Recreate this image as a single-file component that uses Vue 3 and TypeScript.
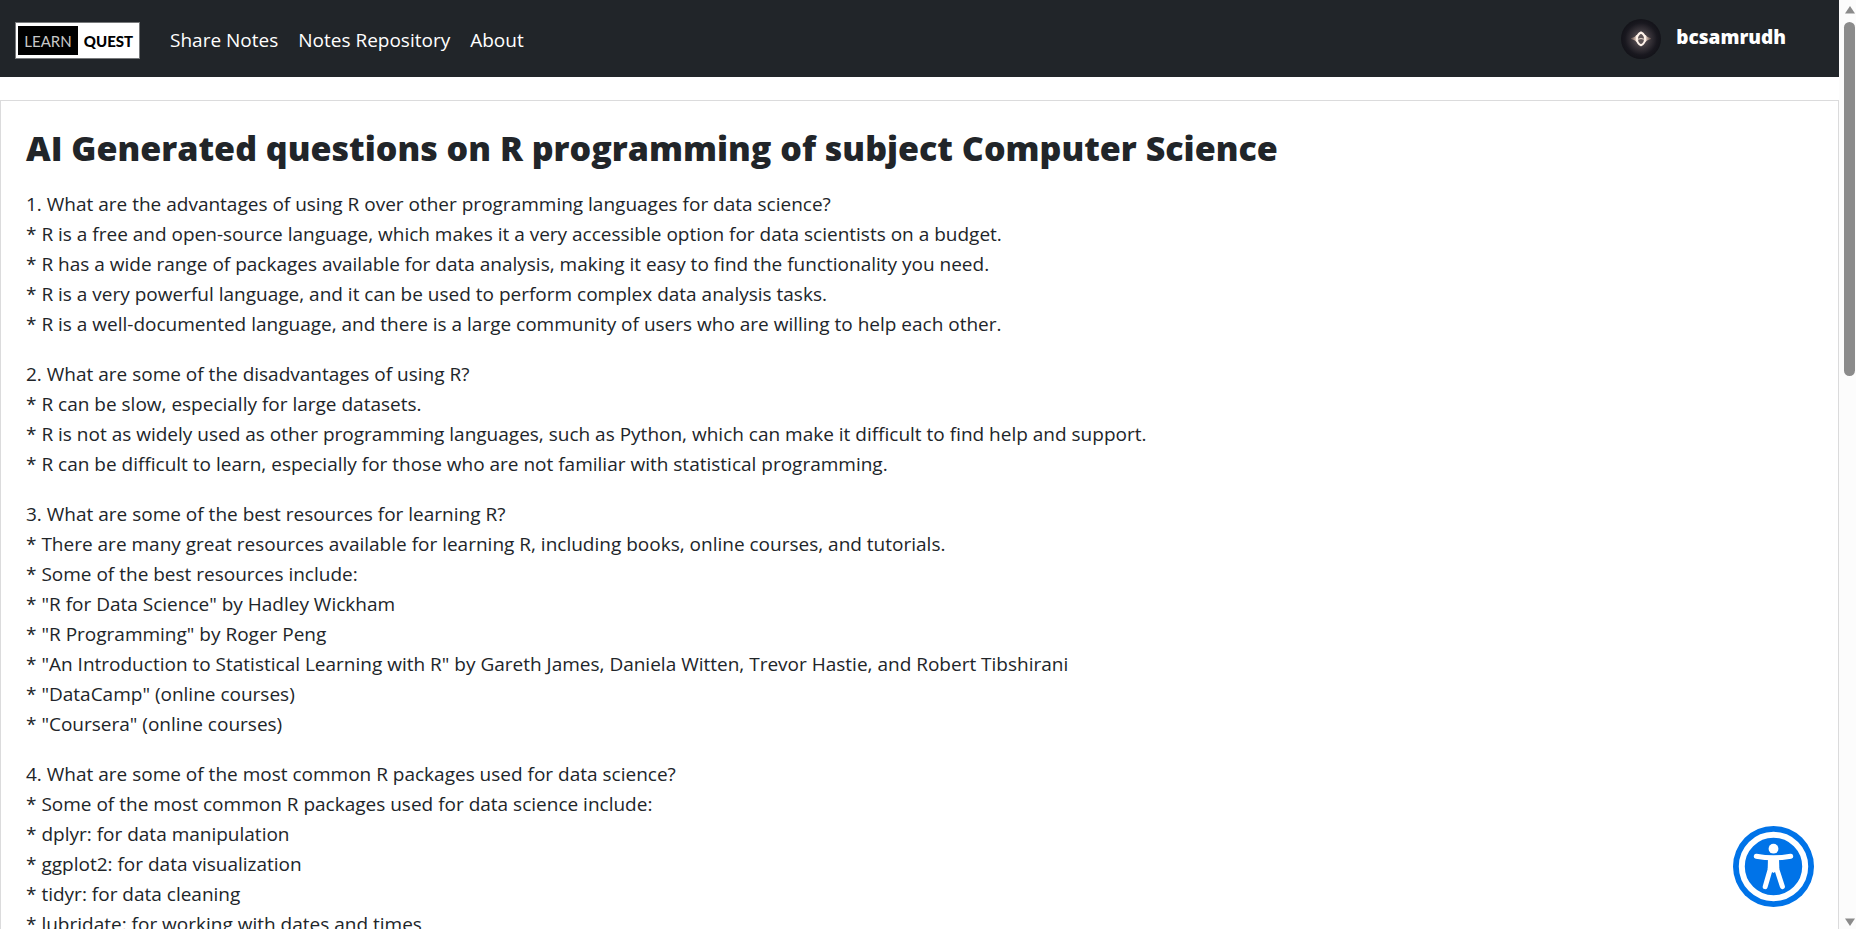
<script setup lang="ts">
interface Section {
  question: string
  points: string[]
}

const links: string[] = ['Share Notes', 'Notes Repository', 'About']

const sections: Section[] = [
  {
    question: '1. What are the advantages of using R over other programming languages for data science?',
    points: [
      'R is a free and open-source language, which makes it a very accessible option for data scientists on a budget.',
      'R has a wide range of packages available for data analysis, making it easy to find the functionality you need.',
      'R is a very powerful language, and it can be used to perform complex data analysis tasks.',
      'R is a well-documented language, and there is a large community of users who are willing to help each other.',
    ],
  },
  {
    question: '2. What are some of the disadvantages of using R?',
    points: [
      'R can be slow, especially for large datasets.',
      'R is not as widely used as other programming languages, such as Python, which can make it difficult to find help and support.',
      'R can be difficult to learn, especially for those who are not familiar with statistical programming.',
    ],
  },
  {
    question: '3. What are some of the best resources for learning R?',
    points: [
      'There are many great resources available for learning R, including books, online courses, and tutorials.',
      'Some of the best resources include:',
      '"R for Data Science" by Hadley Wickham',
      '"R Programming" by Roger Peng',
      '"An Introduction to Statistical Learning with R" by Gareth James, Daniela Witten, Trevor Hastie, and Robert Tibshirani',
      '"DataCamp" (online courses)',
      '"Coursera" (online courses)',
    ],
  },
  {
    question: '4. What are some of the most common R packages used for data science?',
    points: [
      'Some of the most common R packages used for data science include:',
      'dplyr: for data manipulation',
      'ggplot2: for data visualization',
      'tidyr: for data cleaning',
      'lubridate: for working with dates and times',
    ],
  },
]
</script>

<template>
  <div class="window">
    <div class="page">
      <header class="navbar">
        <a class="brand" href="#">
          <span class="brand-dark">LEARN</span>
          <span class="brand-light">QUEST</span>
        </a>
        <nav class="links">
          <a v-for="link in links" :key="link" class="link" href="#">{{ link }}</a>
        </nav>
        <a class="user" href="#">
          <svg class="avatar" viewBox="0 0 40 40" aria-hidden="true">
            <defs>
              <radialGradient id="halo">
                <stop offset="0" stop-color="#6a6063" />
                <stop offset="0.45" stop-color="#3a353b" />
                <stop offset="0.8" stop-color="#19181f" />
                <stop offset="1" stop-color="#131319" />
              </radialGradient>
              <linearGradient id="flare">
                <stop offset="0" stop-color="#b98f78" stop-opacity="0.3" />
                <stop offset="0.3" stop-color="#fff0e6" />
                <stop offset="0.7" stop-color="#fff0e6" />
                <stop offset="1" stop-color="#b98f78" stop-opacity="0.3" />
              </linearGradient>
            </defs>
            <circle cx="20" cy="20" r="20" fill="url(#halo)" />
            <path d="M10 19.2Q14 18.6 15.5 16L24.5 16Q26 18.6 30 19.2V20Q26 20.8 24 23.2L16 23.2Q14 20.8 10 20Z" fill="url(#flare)" />
            <path d="M20 13.5C22 14.500 24 17 24 19.6C24 22.500 22.500 25.500 20 26.300C17.500 25.500 16 22.500 16 19.600C16 17 18 14.500 20 13.500Z" fill="#5e5456" stroke="#fff3ea" stroke-width="2" />
            <path d="M16.500 20.300Q20 18.800 23.500 20.300" fill="none" stroke="#e9d9cf" stroke-width="1" />
          </svg>
          <span class="username">bcsamrudh</span>
        </a>
      </header>

      <main class="card">
        <h1 class="title">AI Generated questions on R programming of subject Computer Science</h1>
        <section v-for="section in sections" :key="section.question" class="section">
          <p>{{ section.question }}</p>
          <p v-for="point in section.points" :key="point">* {{ point }}</p>
        </section>
      </main>
    </div>

    <div class="scrollbar" aria-hidden="true">
      <svg class="arrow" viewBox="0 0 12 10"><path d="M6 1L11 8.500H1Z" /></svg>
      <div class="track"><div class="thumb"></div></div>
      <svg class="arrow" viewBox="0 0 12 10"><path d="M6 9L1 1.500H11Z" /></svg>
    </div>

    <button class="access" type="button" aria-label="Accessibility">
      <svg viewBox="0 0 81 81" aria-hidden="true">
        <circle cx="40.5" cy="40.5" r="40.5" fill="#0073e8" />
        <circle cx="40.5" cy="40.5" r="31.7" fill="none" stroke="#fff" stroke-width="6" />
        <circle cx="40.5" cy="22.7" r="4.9" fill="#fff" />
        <path d="M23.3 30.2Q40.5 33.4 57.7 30.2" fill="none" stroke="#fff" stroke-width="5" stroke-linecap="round" />
        <path d="M35 31.5H46L46.3 43L40.5 47L34.7 43Z" fill="#fff" />
        <path d="M37.3 43L32.200 60.600M43.700 43L49.400 60.600" fill="none" stroke="#fff" stroke-width="5" stroke-linecap="round" />
      </svg>
    </button>
  </div>
</template>

<style>
body {
  margin: 0;
  background: #fff;
}
</style>

<style scoped>
.window {
  display: flex;
  height: 100vh;
  overflow: hidden;
  font-family: "Open Sans", "Noto Sans", sans-serif;
  font-size: 19px;
  line-height: 30px;
  color: #212529;
}

.page {
  flex: 1;
  min-width: 0;
  overflow: hidden;
}

.navbar {
  display: flex;
  align-items: center;
  box-sizing: border-box;
  height: 77px;
  padding: 0 53px 0 15px;
  background: #212529;
}

.brand {
  display: flex;
  align-items: center;
  box-sizing: border-box;
  width: 125px;
  height: 37px;
  margin-top: 4px;
  padding: 2px;
  border: 1px solid #77797b;
  background: #fff;
  font-family: Lato, sans-serif;
  font-size: 15px;
  text-decoration: none;
}

.brand-dark,
.brand-light {
  display: flex;
  align-items: center;
  justify-content: center;
  height: 29px;
}

.brand-dark {
  width: 60px;
  background: #000;
  color: #c8c8c8;
  font-weight: 400;
}

.brand-light {
  flex: 1;
  padding-left: 2px;
  color: #000;
  font-weight: 900;
}

.links {
  display: flex;
  gap: 20px;
  margin: 2px 0 0 30px;
}

.link {
  color: #fff;
  text-decoration: none;
}

.user {
  display: flex;
  align-items: center;
  gap: 15px;
  margin-left: auto;
  color: #fff;
  font-weight: 800;
  text-decoration: none;
}

.username {
  padding-bottom: 4px;
}

.avatar {
  width: 40px;
  height: 40px;
}

.card {
  margin-top: 23px;
  padding: 23px 25px;
  border: 1px solid #dbdbdc;
}

.title {
  margin: 0 0 17px;
  font-size: 34px;
  line-height: 48px;
  font-weight: 800;
}

.section {
  margin-bottom: 20px;
}

.section p {
  margin: 0;
}

.scrollbar {
  display: flex;
  flex-direction: column;
  align-items: center;
  box-sizing: border-box;
  width: 17px;
  padding: 5px 0 2px 4px;
  background: #fcfcfc;
}

.arrow {
  flex: none;
  width: 12px;
  height: 10px;
  fill: #8b8b8b;
}

.track {
  flex: 1;
  width: 11px;
  padding-top: 7px;
}

.thumb {
  height: 39.5%;
  border-radius: 6px;
  background: #8b8b8b;
}

.access {
  position: fixed;
  right: 42px;
  bottom: 22px;
  width: 81px;
  height: 81px;
  padding: 0;
  border: 0;
  border-radius: 50%;
  background: none;
  cursor: pointer;
}

.access svg {
  display: block;
  width: 100%;
  height: 100%;
}
</style>
